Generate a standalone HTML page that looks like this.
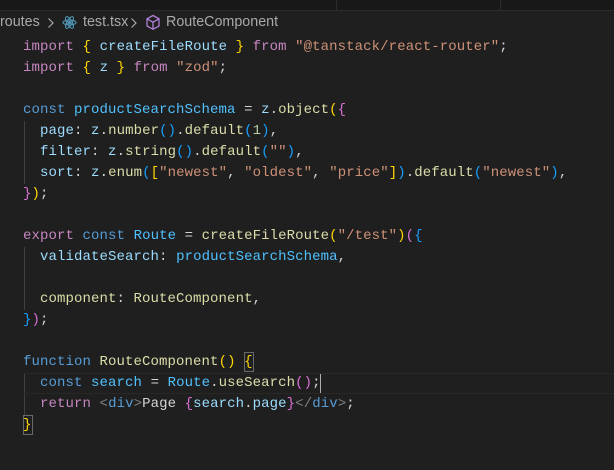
<!DOCTYPE html>
<html><head><meta charset="utf-8"><style>
body{margin:0;width:614px;height:470px;background:#1f1f1f;overflow:hidden;position:relative;font-family:"Liberation Mono",monospace}
.top{position:absolute;left:0;top:0;width:614px;height:10px;background:#181818;border-bottom:1px solid #2b2b2b}
.vl{position:absolute;top:0;width:1px;height:10px;background:#2b2b2b}
.bc{position:absolute;left:0;top:13px;height:20px;font:14.3px "Liberation Sans",sans-serif;color:#a9a9a9;white-space:nowrap}
.bc span{position:absolute;top:1px}
.code{position:absolute;left:23px;top:37px;font-size:14px;line-height:21px;white-space:pre;color:#d4d4d4;letter-spacing:0.1px}
.k{color:#c586c0}.s{color:#569cd6}.v{color:#9cdcfe}.f{color:#dcdcaa}.t{color:#ce9178}.n{color:#b5cea8}.c{color:#4fc1ff}.g{color:#808080}
.b1{color:#ffd700}.b2{color:#da70d6}.b3{color:#179fff}
.guide{position:absolute;left:24px;width:1px;background:#404040}
.cur{position:absolute;left:23px;top:373px;width:591px;height:19px;border:1px solid #282828;border-left:none}
.box{position:absolute;border:1px solid #6a6a6a;width:8px;height:18px}
</style></head><body>
<div class="top"><div class="vl" style="left:336px"></div><div class="vl" style="left:500px"></div></div>
<div class="bc">
<span style="left:0">routes</span>
<svg style="position:absolute;left:47px;top:4px" width="8" height="12" viewBox="0 0 8 12" fill="none" stroke="#a9a9a9" stroke-width="1.2"><path d="M1.5 1.5L6 6L1.5 10.5"/></svg>
<svg style="position:absolute;left:62px;top:2px" width="15" height="15" viewBox="0 0 16 16" fill="none" stroke="#519aba" stroke-width="1.1"><ellipse cx="8" cy="8" rx="7" ry="2.7"/><ellipse cx="8" cy="8" rx="7" ry="2.7" transform="rotate(60 8 8)"/><ellipse cx="8" cy="8" rx="7" ry="2.7" transform="rotate(120 8 8)"/><circle cx="8" cy="8" r="1.2" fill="#519aba"/></svg>
<span style="left:83px">test.tsx</span>
<svg style="position:absolute;left:130px;top:4px" width="8" height="12" viewBox="0 0 8 12" fill="none" stroke="#a9a9a9" stroke-width="1.2"><path d="M1.5 1.5L6 6L1.5 10.5"/></svg>
<svg style="position:absolute;left:145px;top:1px" width="16" height="17" viewBox="0 0 16 17" fill="none" stroke="#b180d7" stroke-width="1.3"><path d="M8 1.5L14 4.8V12L8 15.3L2 12V4.8Z M2 4.8L8 8.2L14 4.8 M8 8.2V15.3"/></svg>
<span style="left:166px">RouteComponent</span>
</div>
<div class="guide" style="top:121px;height:63px"></div>
<div class="guide" style="top:247px;height:63px"></div>
<div class="guide" style="top:373px;height:42px"></div>
<div class="cur"></div>
<div class="box" style="left:244px;top:352px"></div>
<div class="box" style="left:23px;top:415px"></div>
<div class="code"><span class="k">import</span> <span class="b1">{</span> <span class="v">createFileRoute</span> <span class="b1">}</span> <span class="k">from</span> <span class="t">"@tanstack/react-router"</span>;
<span class="k">import</span> <span class="b1">{</span> <span class="v">z</span> <span class="b1">}</span> <span class="k">from</span> <span class="t">"zod"</span>;

<span class="s">const</span> <span class="c">productSearchSchema</span> = <span class="v">z</span>.<span class="f">object</span><span class="b1">(</span><span class="b2">{</span>
  <span class="v">page</span>: <span class="v">z</span>.<span class="f">number</span><span class="b3">()</span>.<span class="f">default</span><span class="b3">(</span><span class="n">1</span><span class="b3">)</span>,
  <span class="v">filter</span>: <span class="v">z</span>.<span class="f">string</span><span class="b3">()</span>.<span class="f">default</span><span class="b3">(</span><span class="t">""</span><span class="b3">)</span>,
  <span class="v">sort</span>: <span class="v">z</span>.<span class="f">enum</span><span class="b3">(</span><span class="b1">[</span><span class="t">"newest"</span>, <span class="t">"oldest"</span>, <span class="t">"price"</span><span class="b1">]</span><span class="b3">)</span>.<span class="f">default</span><span class="b3">(</span><span class="t">"newest"</span><span class="b3">)</span>,
<span class="b2">}</span><span class="b1">)</span>;

<span class="k">export</span> <span class="s">const</span> <span class="c">Route</span> = <span class="f">createFileRoute</span><span class="b1">(</span><span class="t">"/test"</span><span class="b1">)</span><span class="b2">(</span><span class="b3">{</span>
  <span class="v">validateSearch</span>: <span class="c">productSearchSchema</span>,

  <span class="f">component</span>: <span class="f">RouteComponent</span>,
<span class="b3">}</span><span class="b2">)</span>;

<span class="s">function</span> <span class="f">RouteComponent</span><span class="b1">()</span> <span class="b1">{</span>
  <span class="s">const</span> <span class="c">search</span> = <span class="c">Route</span>.<span class="f">useSearch</span><span class="b2">()</span>;
  <span class="k">return</span> <span class="g">&lt;</span><span class="s">div</span><span class="g">&gt;</span>Page <span class="b2">{</span><span class="v">search</span>.<span class="v">page</span><span class="b2">}</span><span class="g">&lt;/</span><span class="s">div</span><span class="g">&gt;</span>;
<span class="b1">}</span></div>
<div style="position:absolute;left:320px;top:374px;width:1px;height:19px;background:#aeafad"></div>
</body></html>
